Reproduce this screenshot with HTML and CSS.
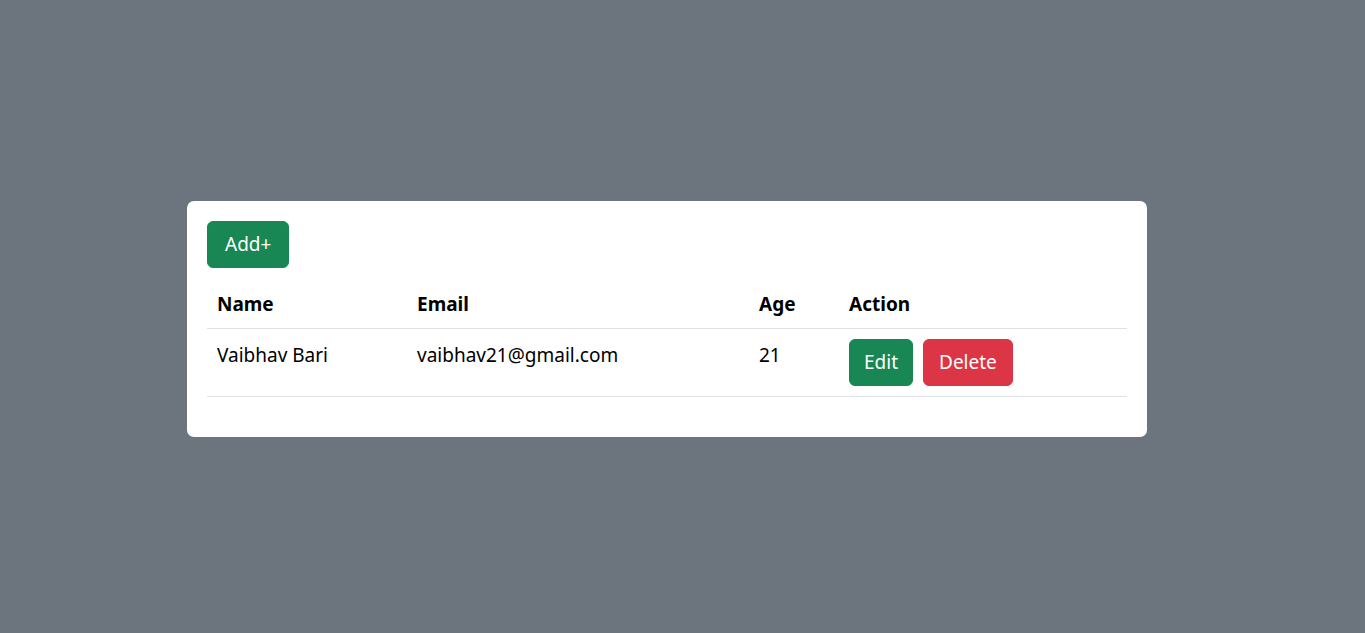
FILE: index.html
```html
<!DOCTYPE html>
<html lang="en">
<head>
<meta charset="utf-8">
<title>Users</title>
<link rel="stylesheet" href="styles.css">
</head>
<body>
<main class="page">
  <section class="card">
    <button class="btn btn-success btn-add">Add+</button>
    <table class="table">
      <thead>
        <tr>
          <th class="col-name">Name</th>
          <th class="col-email">Email</th>
          <th class="col-age">Age</th>
          <th class="col-action">Action</th>
        </tr>
      </thead>
      <tbody>
        <tr>
          <td>Vaibhav Bari</td>
          <td>vaibhav21@gmail.com</td>
          <td>21</td>
          <td class="action-cell">
            <div class="actions">
              <button class="btn btn-success btn-row">Edit</button>
              <button class="btn btn-danger btn-row btn-delete">Delete</button>
            </div>
          </td>
        </tr>
      </tbody>
    </table>
  </section>
</main>
</body>
</html>
```
FILE: styles.css
```css
* { box-sizing: border-box; }
html, body { margin: 0; height: 100%; }
body {
  background: #6c757d;
  font-family: "Noto Sans", "Open Sans", sans-serif;
  color: #000;
}
.page {
  height: 100vh;
  display: flex;
  align-items: center;
  padding-left: 187px;
  padding-top: 5px;
}
.card {
  width: 960px;
  background: #fff;
  border-radius: 7px;
  padding: 20px 20px 40px;
}
.btn {
  display: inline-block;
  font-family: inherit;
  font-size: 19px;
  line-height: 29px;
  padding: 8px 16px;
  border: 1px solid transparent;
  border-radius: 6px;
  color: #fff;
  cursor: pointer;
  vertical-align: top;
}
.btn-add { padding: 8px 17px; }
.btn-row { padding: 8px 14px; }
.btn-delete { padding: 8px 15px; }
.btn-success { background: #198754; border-color: #198754; }
.btn-danger { background: #dc3545; border-color: #dc3545; }
.actions {
  display: flex;
  gap: 10px;
}
.table {
  width: 100%;
  border-collapse: collapse;
  margin-top: 14px;
  font-size: 19px;
}
.table th {
  text-align: left;
  font-weight: 700;
  line-height: 30px;
  padding: 7px 10px 9px;
  border-bottom: 1px solid #dee2e6;
}
.table td {
  line-height: 30px;
  padding: 11px 10px 9px;
  vertical-align: top;
  border-bottom: 1px solid #dee2e6;
}
.table td.action-cell { padding: 10px; }
.col-name { width: 200px; }
.col-email { width: 342px; }
.col-age { width: 90px; }
```
